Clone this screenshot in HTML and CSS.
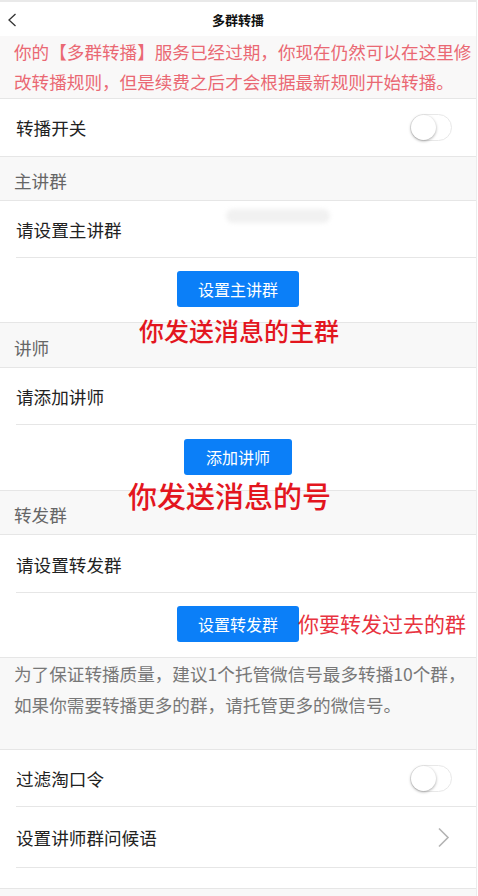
FILE: index.html
```html
<!DOCTYPE html>
<html lang="zh-CN">
<head>
<meta charset="utf-8">
<title>多群转播</title>
<link rel="stylesheet" href="styles.css">
</head>
<body>
<div class="page">
  <header class="nav">
    <svg class="back" width="10" height="14" viewBox="0 0 10 14"><path d="M8.5 1 L2 7 L8.5 13" fill="none" stroke="#333" stroke-width="1.3"/></svg>
    <div class="nav-title">多群转播</div>
  </header>

  <div class="notice">你的【多群转播】服务已经过期，你现在仍然可以在这里修改转播规则，但是续费之后才会根据最新规则开始转播。</div>

  <div class="row row-switch">
    <span class="label">转播开关</span>
    <span class="toggle"><span class="knob"></span></span>
  </div>

  <div class="section-head">主讲群</div>
  <div class="row row-inset">
    <span class="label">请设置主讲群</span>
    <span class="blur"></span>
  </div>
  <div class="btn-area btn-area-1">
    <button class="btn btn-wide">设置主讲群</button>
    <span class="note note-1">你发送消息的主群</span>
  </div>

  <div class="section-head section-head-2">讲师</div>
  <div class="row row-inset">
    <span class="label">请添加讲师</span>
  </div>
  <div class="btn-area btn-area-2">
    <button class="btn">添加讲师</button>
    <span class="note note-2">你发送消息的号</span>
  </div>

  <div class="section-head">转发群</div>
  <div class="row row-inset row-58">
    <span class="label">请设置转发群</span>
  </div>
  <div class="btn-area btn-area-3">
    <button class="btn btn-wide">设置转发群</button>
    <span class="note note-3">你要转发过去的群</span>
  </div>

  <div class="tip">为了保证转播质量，建议1个托管微信号最多转播10个群，如果你需要转播更多的群，请托管更多的微信号。</div>

  <div class="list">
    <div class="row row-inset">
      <span class="label">过滤淘口令</span>
      <span class="toggle"><span class="knob"></span></span>
    </div>
    <div class="row row-inset row-tall">
      <span class="label">设置讲师群问候语</span>
      <svg class="chev" width="13" height="21" viewBox="0 0 13 21"><path d="M2 1.5 L11 10.5 L2 19.5" fill="none" stroke="#b3b3b3" stroke-width="1.6"/></svg>
    </div>
    <div class="list-foot"></div>
  </div>
  <div class="bottom"></div>
</div>
</body>
</html>
```

FILE: styles.css
```css
* { box-sizing: border-box; }
html, body { margin: 0; padding: 0; background: #fff; }
body {
  font-family: "Microsoft YaHei", "Noto Sans CJK SC", "Noto Sans", sans-serif;
  color: #222;
}
.page {
  width: 477px;
  border-right: 1px solid #ececec;
  background: #fff;
}
.nav {
  height: 36px;
  border-top: 2px solid #e9e9e9;
  display: flex;
  align-items: center;
  justify-content: center;
  position: relative;
}
.back { position: absolute; left: 7px; top: 11px; }
.nav-title {
  font-size: 13px;
  font-weight: 700;
  color: #111;
}
.notice {
  background: #f9f8f8;
  color: #ea6873;
  font-size: 17.6px;
  line-height: 30px;
  padding: 1px 4px 1px 14px;
  border-bottom: 1px solid #e6e6e6;
  height: 63px;
}
.row {
  display: flex;
  align-items: center;
  justify-content: space-between;
  height: 57px;
  padding: 0 24px 0 16px;
  font-size: 17.6px;
  color: #222;
  position: relative;
  border-bottom: 1px solid #e6e6e6;
}
.row-switch { height: 58px; }
.row-58 { height: 58px; }
.row-inset { border-bottom: none; }
.row-inset::after {
  content: "";
  position: absolute;
  left: 16px; right: 0; bottom: 0;
  height: 1px;
  background: #e6e6e6;
}
.row-tall { height: 61px; }
.toggle {
  width: 42px;
  height: 27px;
  border-radius: 14px;
  border: 1px solid #e8e8e8;
  background: #fff;
  position: relative;
}
.knob {
  position: absolute;
  left: 0; top: 0;
  width: 25px; height: 25px;
  border-radius: 50%;
  background: #fff;
  box-shadow: 0 1px 3px rgba(0,0,0,0.35);
}
.chev { margin-right: 2px; }
.blur {
  position: absolute;
  left: 226px; top: 8px;
  width: 104px; height: 14px;
  border-radius: 7px;
  background: #f1f1f1;
  filter: blur(2px);
}
.section-head {
  background: #f8f8f8;
  height: 44px;
  padding: 0 14px 8px;
  display: flex;
  align-items: flex-end;
  font-size: 17.6px;
  line-height: 22px;
  color: #666;
  border-bottom: 1px solid #e6e6e6;
}
.section-head-2 { height: 45px; }
.btn-area {
  position: relative;
  height: 65px;
  display: flex;
  justify-content: center;
  padding-top: 13px;
  border-bottom: 1px solid #e6e6e6;
}
.btn-area-2 { padding-top: 14px; height: 66px; }
.btn {
  height: 36px;
  padding: 0 21.5px;
  border: none;
  border-radius: 3px;
  background: #0b7ff8;
  color: #fff;
  font-family: inherit;
  font-size: 16px;
  line-height: 36px;
}
.btn-wide { padding: 0 21px; }
.note {
  position: absolute;
  color: #e3161e;
  white-space: nowrap;
  line-height: 1;
}
.note-1 { left: 139px; top: 60px; font-size: 25px; font-weight: 500; }
.note-2 { left: 128px; top: 56px; font-size: 29px; font-weight: 500; }
.note-3 { left: 298px; top: 20px; font-size: 21px; color: #e8333f; }
.tip {
  background: #f8f8f8;
  color: #777;
  font-size: 17.6px;
  line-height: 31px;
  padding: 0 4px 30px 14px;
  height: 92px;
  border-bottom: 1px solid #e6e6e6;
}
.list-foot {
  height: 21px;
  border-bottom: 1px solid #e6e6e6;
}
.bottom { height: 7px; background: #f8f8f8; }
```
